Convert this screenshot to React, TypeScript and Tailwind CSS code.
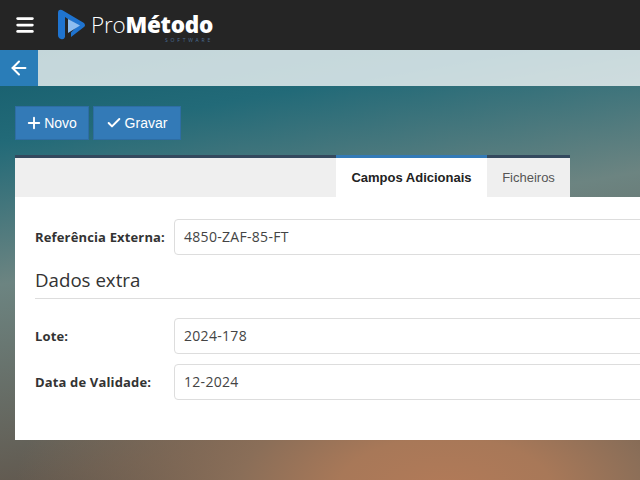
import { ArrowLeft, Check, Menu, Plus } from "lucide-react";

const Logo = () => (
  <div className="flex items-center">
    <svg width="30" height="32" viewBox="0 0 30 32" className="ml-[1px] shrink-0">
      <path d="M1 4 Q1 0 5 1 L27 14 Q29 16.500 27 18 L14 28 L14 23.500 L21 16.500 L8 8 L8 28 Q7 31 4 30 Q1 29 1 26 Z" fill="#1f74d0" />
      <path d="M11 10 L23 16.500 L11 24 Z" fill="#8dbdf0" />
    </svg>
    <div className="ml-[4px] flex flex-col pt-[6px]">
      <div className="font-['Open_Sans',sans-serif] text-[22.500px] leading-[24px] tracking-[-0.25px] text-white">
        <span className="font-light">Pro</span>
        <span className="font-extrabold">Método</span>
      </div>
      <div className="text-right font-['Open_Sans',sans-serif] text-[5px] leading-[6px] tracking-[2.8px] text-[#4a6d96]">
        SOFTWARE
      </div>
    </div>
  </div>
);

const Field = ({ label, value }: { label: string; value: string }) => (
  <div className="flex items-center">
    <label className="w-[139px] shrink-0 pt-[1px] text-[13px] font-bold tracking-[0.15px] text-[#333]">{label}</label>
    <div className="flex h-[36px] flex-1 items-center rounded-[4px] border border-[#ddd] bg-white px-[9px] pb-[1px] text-[14px] tracking-[0.3px] text-[#444]">
      {value}
    </div>
  </div>
);

export default function App() {
  return (
    <div className="relative h-[480px] w-[640px] overflow-hidden bg-[radial-gradient(ellipse_430px_210px_at_445px_490px,#b27a58_0%,#a87858_25%,#8a6e58_48%,transparent_100%),linear-gradient(170deg,#0f5666_0%,#226a78_24%,#6c8481_48%,#625a50_82%,#4a423b_100%)] font-['Open_Sans',sans-serif]">
      <header className="flex h-[50px] items-center bg-[#252525] pl-[14px]">
        <Menu size={22} strokeWidth={3} className="text-white" />
        <div className="ml-[20px]">
          <Logo />
        </div>
      </header>

      <div className="flex h-[36px] bg-white/75">
        <button className="flex w-[38px] items-center justify-center bg-[#2a7db8] text-white">
          <ArrowLeft size={22} strokeWidth={2.2} />
        </button>
      </div>

      <div className="px-[15px] pt-[20px]">
        <div className="flex gap-[4px] font-['Liberation_Sans',sans-serif] text-[14px] text-white">
          <button className="flex h-[34px] w-[74px] items-center justify-center gap-[1px] border border-[#2e6da4] bg-[#337ab7] pr-[2px]">
            <Plus size={18} strokeWidth={2.5} />
            Novo
          </button>
          <button className="flex h-[34px] w-[88px] items-center justify-center gap-[3px] border border-[#2e6da4] bg-[#337ab7] pr-[1px]">
            <Check size={16} strokeWidth={3} />
            Gravar
          </button>
        </div>

        <div className="mt-[15px] w-[640px]">
          <div className="flex h-[42px] font-['Liberation_Sans',sans-serif] text-[13px]">
            <div className="w-[321px] border-t-[3px] border-[#34495e] bg-[#efefef]" />
            <div className="flex w-[151px] items-center justify-center border-t-[3px] border-[#337ab7] bg-white font-bold text-[#222]">
              Campos Adicionais
            </div>
            <div className="flex w-[83px] items-center justify-center border-t-[3px] border-[#34495e] bg-[#efefef] text-[#555]">
              Ficheiros
            </div>
          </div>
          <div className="h-[243px] bg-white pl-[20px] pt-[22px]">
            <Field label="Referência Externa:" value="4850-ZAF-85-FT" />
            <h2 className="mt-[11px] border-b border-[#ddd] pb-[4px] text-[18.700px] leading-[28px] text-[#333]">
              Dados extra
            </h2>
            <div className="mt-[19px] flex flex-col gap-[10px]">
              <Field label="Lote:" value="2024-178" />
              <Field label="Data de Validade:" value="12-2024" />
            </div>
          </div>
        </div>
      </div>
    </div>
  );
}
